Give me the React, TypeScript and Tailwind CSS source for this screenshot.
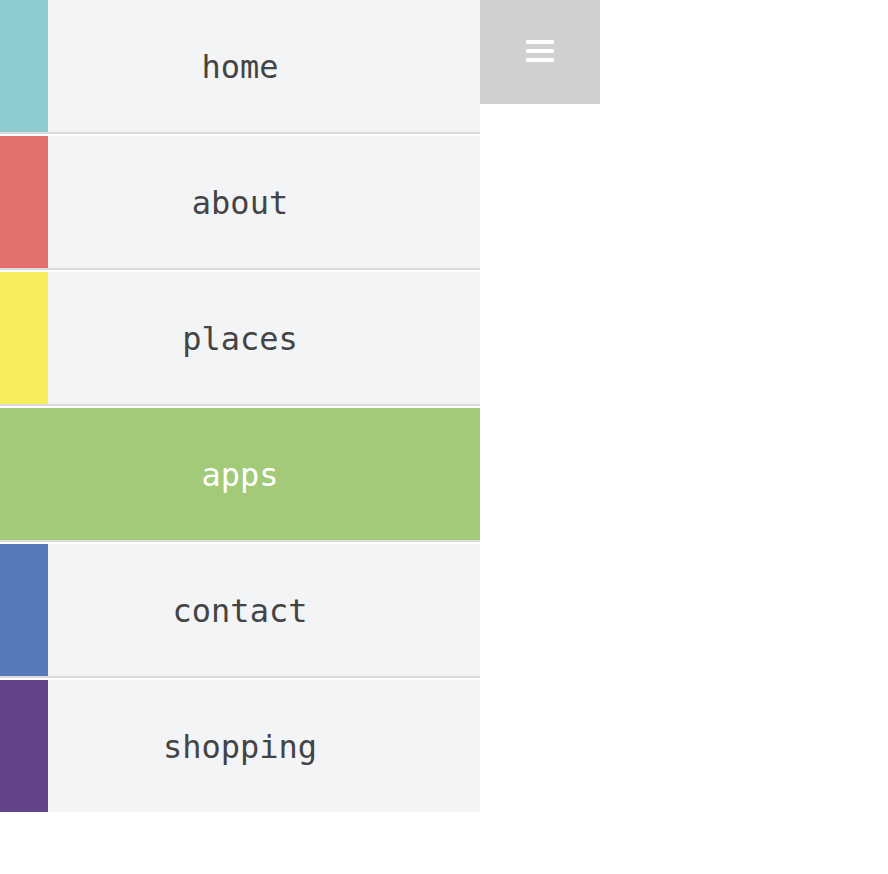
const ITEMS = [
  { label: 'home', bar: 'bg-[#8ecbce]' },
  { label: 'about', bar: 'bg-[#e36f6b]' },
  { label: 'places', bar: 'bg-[#f7ee5d]' },
  { label: 'apps', bar: 'bg-[#a3ca78]', active: true },
  { label: 'contact', bar: 'bg-[#5679b9]' },
  { label: 'shopping', bar: 'bg-[#634389]' },
];

export default function App() {
  return (
    <div className="flex min-h-[874px] w-[888px] items-start bg-white font-['DejaVu_Sans_Mono',monospace]">
      {/* Side menu */}
      <nav className="flex w-[480px] flex-col">
        {ITEMS.map((item, i) => {
          const last = i === ITEMS.length - 1;
          return (
            <a
              key={item.label}
              href="#"
              className={`flex h-[132px] box-content ${
                last ? '' : 'mb-[2px] border-b-2 border-[#dcdcdc]'
              } ${item.active ? 'bg-[#a3ca78]' : 'bg-[#f3f4f6]'}`}
            >
              {!item.active && <span className={`w-12 shrink-0 ${item.bar}`} />}
              <span
                className={`flex flex-1 items-center justify-center pt-[2px] text-[32px] ${
                  item.active ? 'text-white' : 'pr-12 text-[#444444]'
                }`}
              >
                {item.label}
              </span>
            </a>
          );
        })}
      </nav>

      {/* Toggle button */}
      <button className="flex h-[104px] w-[120px] items-center justify-center bg-[#d0d0d0]">
        <svg width="28" height="23" viewBox="0 0 28 23" className="-mt-[2px]">
          <rect x="0" y="0" width="28" height="4" rx="1" fill="white" />
          <rect x="0" y="9" width="28" height="4" rx="1" fill="white" />
          <rect x="0" y="18" width="28" height="4" rx="1" fill="white" />
        </svg>
      </button>
    </div>
  );
}
